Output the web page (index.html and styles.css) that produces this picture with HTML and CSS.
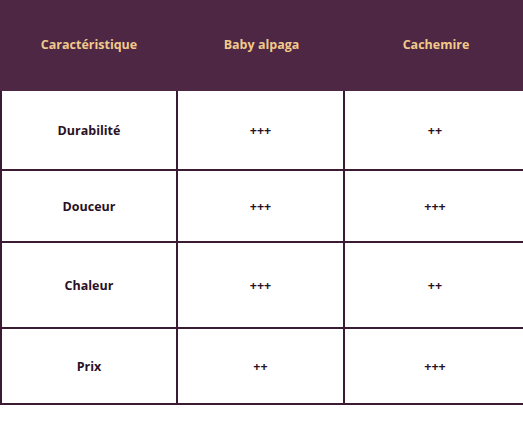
FILE: index.html
```html
<!DOCTYPE html>
<html lang="fr">
<head>
<meta charset="utf-8">
<title>Comparatif</title>
<link rel="stylesheet" href="styles.css">
</head>
<body>
<div class="compare" role="table">
  <div class="cell head" role="columnheader">Caractéristique</div>
  <div class="cell head" role="columnheader">Baby alpaga</div>
  <div class="cell head" role="columnheader">Cachemire</div>

  <div class="cell first" role="cell">Durabilité</div>
  <div class="cell" role="cell">+++</div>
  <div class="cell" role="cell">++</div>

  <div class="cell first" role="cell">Douceur</div>
  <div class="cell" role="cell">+++</div>
  <div class="cell" role="cell">+++</div>

  <div class="cell first" role="cell">Chaleur</div>
  <div class="cell" role="cell">+++</div>
  <div class="cell" role="cell">++</div>

  <div class="cell first" role="cell">Prix</div>
  <div class="cell" role="cell">++</div>
  <div class="cell" role="cell">+++</div>
</div>
</body>
</html>
```

FILE: styles.css
```css
html, body {
  margin: 0;
  padding: 0;
  background: #ffffff;
  overflow: hidden;
}

.compare {
  display: grid;
  grid-template-columns: 178px 167px 182px;
  grid-template-rows: 91px 80px 72px 86px 76px;
  width: 527px;
  font-family: "Open Sans", "Liberation Sans", sans-serif;
  font-weight: 700;
  font-size: 12.5px;
  color: #2a1024;
}

.cell {
  box-sizing: border-box;
  display: flex;
  align-items: center;
  justify-content: center;
  text-align: center;
  border-right: 2px solid #3b1a33;
  border-bottom: 2px solid #3b1a33;
}

.cell.first {
  border-left: 2px solid #3b1a33;
}

.cell.head {
  background: #4d2743;
  color: #f1c98c;
  border: none;
  padding-bottom: 2px;
}
```
